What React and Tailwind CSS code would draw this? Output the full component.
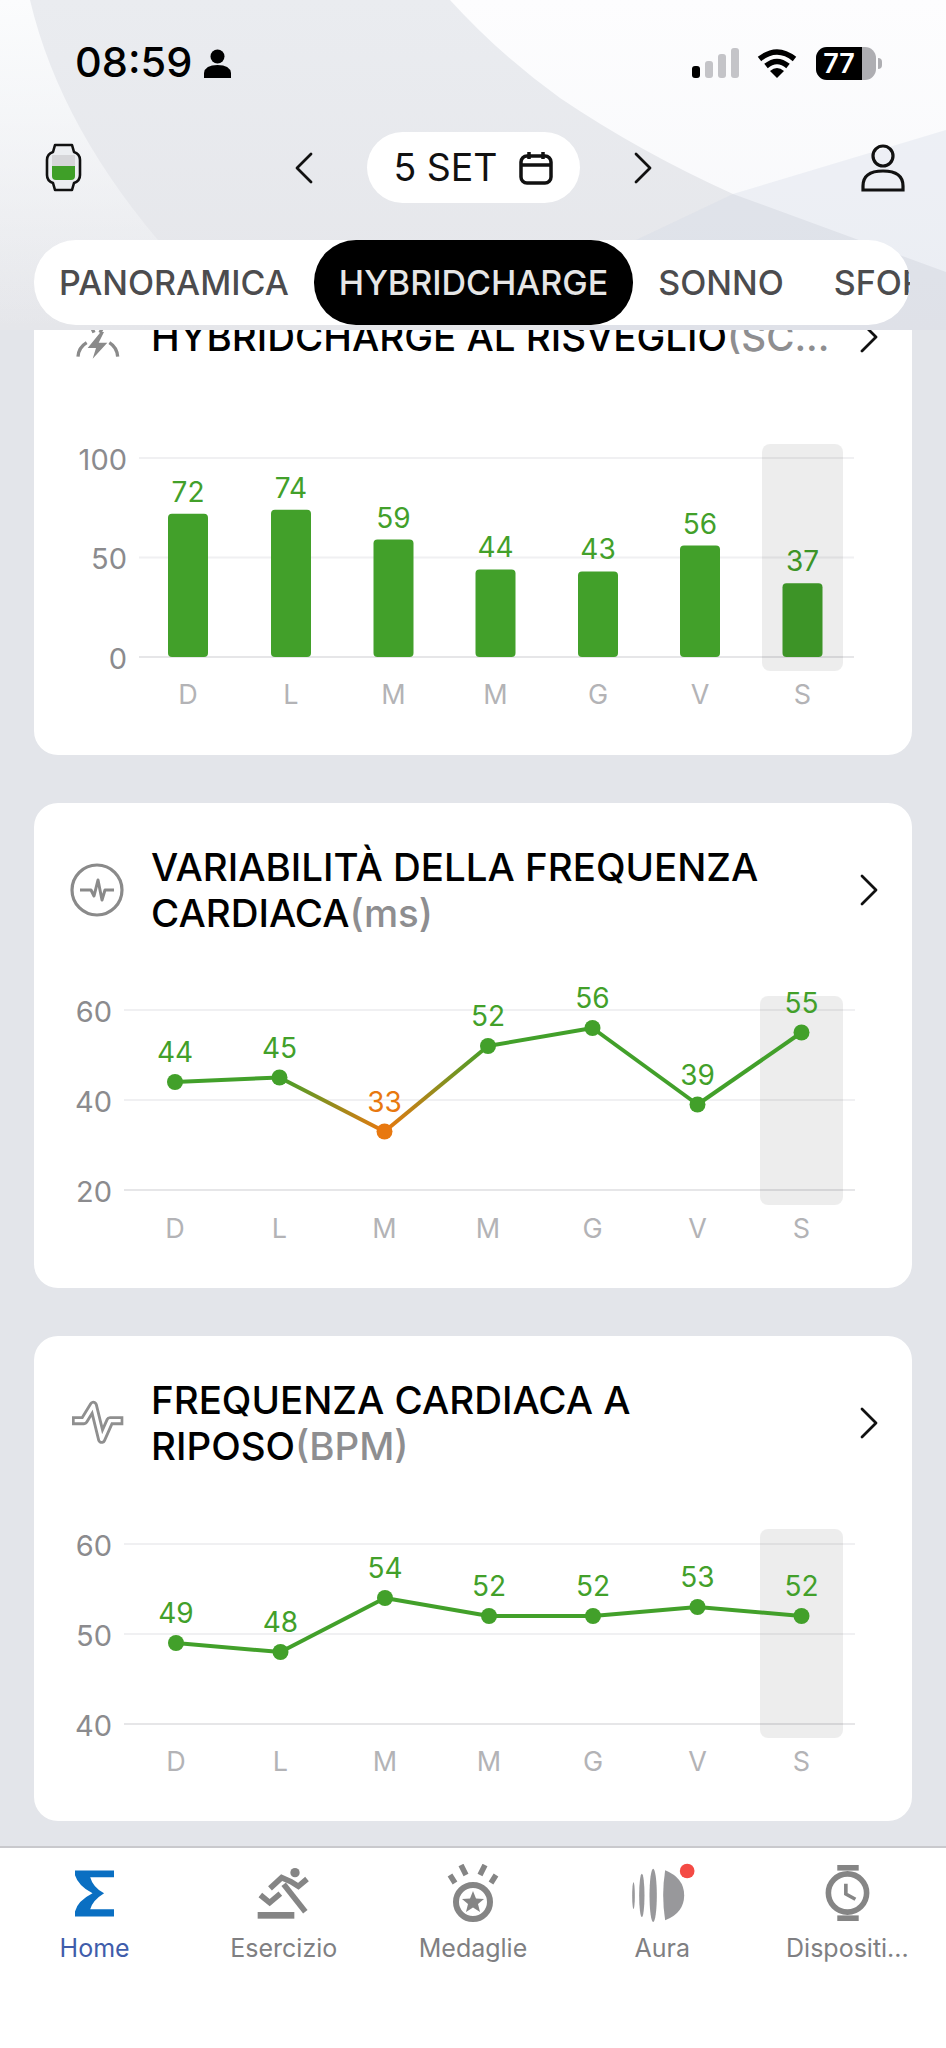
import React from 'react';

const GREEN = '#42a02a';
const ORANGE = '#e8780f';
const DAYS = ['D', 'L', 'M', 'M', 'G', 'V', 'S'];

function Chevron({ dir = 'right', className = '' }) {
  return (
    <svg viewBox="0 0 18 32" className={className} fill="none" stroke="#111" strokeWidth="2.8" strokeLinecap="round" strokeLinejoin="round">
      <path d={dir === 'right' ? 'M2 2 L16 16 L2 30' : 'M16 2 L2 16 L16 30'} />
    </svg>
  );
}

function BarChart({ values }) {
  const xs = [188, 291, 393.5, 495.5, 598, 700, 802.5];
  const zero = 293;
  const unit = 1.99;
  return (
    <svg width="878" height="391" className="block">
      {[100, 50, 0].map((t) => (
        <g key={t}>
          <line x1="105" x2="820" y1={zero - t * unit} y2={zero - t * unit} stroke={t === 0 ? '#e6e6e8' : '#f0f0f2'} strokeWidth="2" />
          <text x="93" y={zero - t * unit + 1} textAnchor="end" dominantBaseline="central" fontSize="29" fill="#8b8b8e">{t}</text>
        </g>
      ))}
      {values.map((v, i) => (
        <g key={i}>
          <path
            d={`M${xs[i] - 54} ${zero - 4} v${-(v * unit) + 8} q0 -4 4 -4 h32 q4 0 4 4 v${v * unit - 8} q0 4 -4 4 h-32 q-4 0 -4 -4 z`}
            fill={GREEN}
          />
          <text x={xs[i] - 34} y={zero - v * unit - 22} textAnchor="middle" dominantBaseline="central" fontSize="28" fill={GREEN}>{v}</text>
          <text x={xs[i] - 34} y="330" textAnchor="middle" dominantBaseline="central" fontSize="27" fill="#b3b3b6">{DAYS[i]}</text>
        </g>
      ))}
      <rect x="728" y="80" width="81" height="227" rx="8" fill="#000" fillOpacity="0.07" />
    </svg>
  );
}

function LineChart({ id, values, ticks, xs, gridY, highlight, dayY, low }) {
  const y = (v) => gridY[2] + ((v - ticks[2]) / (ticks[0] - ticks[2])) * (gridY[0] - gridY[2]);
  const color = (v) => (low && v === low ? ORANGE : GREEN);
  return (
    <svg width="878" height={dayY + 60} className="block">
      <defs>
        {values.slice(1).map((v, i) => (
          <linearGradient key={i} id={`${id}-${i}`} gradientUnits="userSpaceOnUse" x1={xs[i]} x2={xs[i + 1]} y1={y(values[i])} y2={y(v)}>
            <stop offset="0" stopColor={color(values[i])} />
            <stop offset="1" stopColor={color(v)} />
          </linearGradient>
        ))}
      </defs>
      {ticks.map((t, i) => (
        <g key={t}>
          <line x1="90" x2="821" y1={gridY[i]} y2={gridY[i]} stroke={i === 2 ? '#e6e6e8' : '#f0f0f2'} strokeWidth="2" />
          <text x="78" y={gridY[i] + 1} textAnchor="end" dominantBaseline="central" fontSize="29" fill="#8b8b8e">{t}</text>
        </g>
      ))}
      <rect x={highlight[0]} y={highlight[1]} width="83" height={highlight[2]} rx="8" fill="#000" fillOpacity="0.07" />
      {values.slice(1).map((v, i) => (
        <line key={i} x1={xs[i]} x2={xs[i + 1]} y1={y(values[i])} y2={y(v)} stroke={values[i] === v ? GREEN : `url(#${id}-${i})`} strokeWidth="4" />
      ))}
      {values.map((v, i) => (
        <g key={i}>
          <circle cx={xs[i]} cy={y(v)} r="8" fill={color(v)} />
          <text x={xs[i]} y={y(v) - 30} textAnchor="middle" dominantBaseline="central" fontSize="28" fill={color(v)}>{v}</text>
          <text x={xs[i]} y={dayY} textAnchor="middle" dominantBaseline="central" fontSize="27" fill="#b3b3b6">{DAYS[i]}</text>
        </g>
      ))}
    </svg>
  );
}

function Card({ icon, title, unit, children }) {
  return (
    <div className="w-[878px] ml-[34px] rounded-[24px] bg-white overflow-hidden">
      <div className="flex items-center pt-[41px] pl-[36px] pr-[34px]">
        <div className="w-[54px] h-[54px] mr-[27px] shrink-0">{icon}</div>
        <div className="flex-1 text-[38.5px] leading-[46px] font-medium text-black whitespace-pre-line">
          {title}
          <span className="text-[#8e8e90]">{unit}</span>
        </div>
        <Chevron className="w-[18px] h-[32px] shrink-0" />
      </div>
      {children}
    </div>
  );
}

function ChargeIcon() {
  return (
    <svg viewBox="60 6 162 162" className="w-full h-full">
      <path d="M112 30 L132 74 M172 30 L150 74" stroke="#8a8a8a" strokeWidth="10" />
      <path d="M152 72 L113 120 H138 L128 152 L172 104 H146 L162 72 Z" fill="#8a8a8a" />
      <path d="M84 146 Q86 118 110 104 M203 146 Q201 118 178 104" stroke="#8a8a8a" strokeWidth="10" fill="none" />
    </svg>
  );
}

function HrvIcon() {
  return (
    <svg viewBox="0 0 54 54" className="w-full h-full" fill="none" stroke="#8a8a8a">
      <circle cx="27" cy="27" r="25" strokeWidth="3.2" />
      <path d="M10 27 H21 L24 33 L28 17 L32 37 L35 27 H44" strokeWidth="3" strokeLinejoin="round" />
    </svg>
  );
}

function RestIcon() {
  return (
    <svg viewBox="30 18 162 162" className="w-full h-full" fill="none" strokeLinejoin="round">
      <path d="M36 92 H72 L100 46 L125 148 L150 92 H190" stroke="#8f8f8f" strokeWidth="27" />
      <path d="M44 92 H72 L100 46 L125 148 L150 92 H182" stroke="#fff" strokeWidth="10" />
    </svg>
  );
}

function SigmaIcon() {
  return (
    <svg viewBox="42 58 118 139" className="w-[39px] h-[47px]">
      <path d="M42 58 H160 V78 H88 Q96 108 130 127 Q96 148 88 175 H160 V197 H42 V182 Q50 150 95 127 Q52 104 42 72 Z" fill="#0a6fc2" />
    </svg>
  );
}

function RunnerIcon() {
  return (
    <svg viewBox="585 45 165 162" className="w-[55px] h-[54px]" fill="none" stroke="#858585" strokeWidth="17">
      <circle cx="702" cy="65" r="14" fill="#858585" stroke="none" />
      <path d="M627 112 L662 80 L690 92 L712 106 L738 84" />
      <path d="M668 100 L733 182" />
      <path d="M598 132 L626 155 L658 128" />
      <rect x="590" y="183" width="110" height="20" fill="#858585" stroke="none" />
    </svg>
  );
}

function MedalIcon() {
  return (
    <svg viewBox="0 0 56 58" className="w-[56px] h-[58px]" fill="none" stroke="#858585">
      <path d="M5 11 L10 19 M16 1 L21 11 M40 1 L35 11 M51 11 L46 19" strokeWidth="5.5" />
      <circle cx="28" cy="38" r="17" strokeWidth="6" />
      <path d="M28 27 L31 34.5 L39 35 L33 40 L35 48 L28 43.5 L21 48 L23 40 L17 35 L25 34.5 Z" fill="#858585" stroke="none" />
    </svg>
  );
}

function AuraIcon() {
  return (
    <svg viewBox="520 30 200 180" className="w-[67px] h-[60px]">
      <ellipse cx="533" cy="128" rx="4" ry="40" fill="#98989b" />
      <ellipse cx="558" cy="127" rx="8" ry="65" fill="#98989b" />
      <ellipse cx="592" cy="127" rx="11" ry="80" fill="#98989b" />
      <path d="M628 52 Q685 75 685 127 Q685 180 628 202 Q616 127 628 52 Z" fill="#98989b" />
      <circle cx="694" cy="54" r="22" fill="#f44a44" />
    </svg>
  );
}

function DeviceIcon() {
  return (
    <svg viewBox="1100 40 146 176" className="w-[49px] h-[58px]" fill="none" stroke="#858585">
      <rect x="1142" y="43" width="65" height="17" fill="#858585" stroke="none" />
      <rect x="1142" y="196" width="65" height="17" fill="#858585" stroke="none" />
      <circle cx="1173" cy="128" r="58" strokeWidth="17" />
      <path d="M1168 100 V131 L1197 147" strokeWidth="11" />
    </svg>
  );
}

function NavItem({ icon, label, active, className = '' }) {
  return (
    <div className={`flex flex-col items-center ${className}`}>
      <div className="h-[60px] flex items-center justify-center">{icon}</div>
      <div className={`mt-[10px] text-[25px] leading-[30px] whitespace-nowrap ${active ? 'text-[#3f5dab]' : 'text-[#7f7f82]'}`}>{label}</div>
    </div>
  );
}

export default function App() {
  return (
    <div className="relative w-[946px] h-[2048px] overflow-hidden flex flex-col bg-[#e3e5ea] [font-family:Inter,sans-serif]">
      {/* soft shapes behind the header */}
      <svg className="absolute left-0 top-0" width="946" height="330" viewBox="0 0 946 330">
        <defs>
          <linearGradient id="bg-main" x1="0" x2="0" y1="0" y2="1">
            <stop offset="0" stopColor="#eaecf0" />
            <stop offset="1" stopColor="#e5e6ea" />
          </linearGradient>
          <linearGradient id="bg-left" x1="0" x2="0" y1="0" y2="1">
            <stop offset="0" stopColor="#fbfcfd" />
            <stop offset="1" stopColor="#fbfcfd" stopOpacity="0" />
          </linearGradient>
          <linearGradient id="bg-top" x1="0" x2="0" y1="0" y2="1">
            <stop offset="0" stopColor="#fdfdfe" />
            <stop offset="1" stopColor="#f6f7fa" />
          </linearGradient>
        </defs>
        <rect width="946" height="330" fill="url(#bg-top)" />
        <path d="M450 0 Q500 55 560 98 Q640 152 733 194 L946 272 V330 H0 V0 Z" fill="url(#bg-main)" />
        <path d="M0 0 H30 Q70 170 245 330 H0 Z" fill="url(#bg-left)" />
        <path d="M946 130 L733 194 L560 276 V330 H946 Z" fill="#d0d6e4" fillOpacity="0.3" />
      </svg>

      <div className="relative h-[126px] shrink-0 flex items-center justify-between pl-[75px] pr-[64px]">
        <div className="flex items-center gap-[12px]">
          <span className="text-[41.5px] font-medium text-black leading-none">08:59</span>
          <svg viewBox="0 0 27 29" className="w-[27px] h-[29px]">
            <circle cx="13.5" cy="7.5" r="7" fill="#000" />
            <path d="M0 29 V24 Q1 16 13.5 16 Q26 16 27 24 V29 Z" fill="#000" />
          </svg>
        </div>
        <div className="flex items-center">
          <div className="flex items-end gap-[5px] h-[30px]">
            <div className="w-[8px] h-[12px] rounded-[3px] bg-black" />
            <div className="w-[8px] h-[17px] rounded-[3px] bg-[#c4c4c8]" />
            <div className="w-[8px] h-[24px] rounded-[3px] bg-[#c4c4c8]" />
            <div className="w-[8px] h-[30px] rounded-[3px] bg-[#c4c4c8]" />
          </div>
          <svg viewBox="0 0 40 31" className="w-[40px] h-[31px] ml-[18px]" fill="none" stroke="#000" strokeWidth="5.5">
            <path d="M2.5 11 Q20 -3 37.5 11" />
            <path d="M9 18 Q20 9 31 18" />
            <path d="M13 23 L20 30 L27 23 Q20 17 13 23 Z" fill="#000" stroke="none" />
          </svg>
          <div className="ml-[19px] w-[60px] h-[33px] rounded-[11px] overflow-hidden bg-[#aeaeb2] flex">
            <div className="w-[46px] bg-black text-white text-[27px] font-semibold leading-[33px] text-center">77</div>
          </div>
          <div className="ml-[2px] w-[4px] h-[11px] rounded-r-[4px] bg-[#aeaeb2]" />
        </div>
      </div>

      <div className="relative shrink-0 mt-[6px] h-[71px] px-[41px] grid grid-cols-[1fr_auto_1fr] items-center">
        <svg viewBox="0 0 37 49" className="w-[37px] h-[49px] ml-[4px]">
          <path d="M10 2 H27 L29 9 Q35 11 35 17 V32 Q35 38 29 40 L27 47 H10 L8 40 Q2 38 2 32 V17 Q2 11 8 9 Z" fill="#eceef1" stroke="#111" strokeWidth="2.6" strokeLinejoin="round" />
          <path d="M7 12 H30 V23 H7 Z" fill="#d6d6d9" />
          <path d="M7 23 H30 V33 Q30 37 26 37 H11 Q7 37 7 33 Z" fill="#3f9f28" />
        </svg>
        <div className="flex items-center">
          <Chevron dir="left" className="w-[18px] h-[32px]" />
          <div className="mx-[54px] w-[213px] h-[71px] rounded-[36px] bg-white flex items-center justify-center">
            <span className="text-[37.5px] text-[#111] leading-none">5 SET</span>
            <svg viewBox="0 0 34 34" className="w-[34px] h-[34px] ml-[21px]" fill="none" stroke="#111" strokeWidth="3.5">
              <rect x="2" y="5" width="30" height="27" rx="6" />
              <path d="M2 14 H32 M10 1 V8 M24 1 V8" />
            </svg>
          </div>
          <Chevron className="w-[18px] h-[32px]" />
        </div>
        <svg viewBox="0 0 44 48" className="w-[44px] h-[48px] justify-self-end" fill="none" stroke="#111" strokeWidth="3.2">
          <circle cx="22" cy="12" r="10" />
          <path d="M2 46 V42 Q2 27 22 27 Q42 27 42 42 V46 Z" />
        </svg>
      </div>

      <div className="relative shrink-0 mt-[37px] ml-[34px] w-[876px] h-[85px] rounded-[42px] bg-white overflow-hidden flex items-stretch text-[34px] font-medium text-[#4c4c4e] whitespace-nowrap">
        <div className="px-[25px] flex items-center shrink-0">PANORAMICA</div>
        <div className="px-[25px] flex items-center shrink-0 rounded-[42px] bg-black text-[#e6e6e6]">HYBRIDCHARGE</div>
        <div className="px-[25px] flex items-center shrink-0">SONNO</div>
        <div className="px-[25px] flex items-center shrink-0">SFORZO</div>
      </div>

      <div className="relative mt-[5px] flex-1 overflow-hidden">
        <div className="flex flex-col gap-[48px] -mt-[61px]">
          <Card icon={<ChargeIcon />} title="HYBRIDCHARGE AL RISVEGLIO" unit="(SC...">
            <BarChart values={[72, 74, 59, 44, 43, 56, 37]} />
          </Card>
          <Card icon={<HrvIcon />} title={'VARIABILITÀ DELLA FREQUENZA\nCARDIACA'} unit="(ms)">
            <LineChart
              id="hrv"
              values={[44, 45, 33, 52, 56, 39, 55]}
              ticks={[60, 40, 20]}
              xs={[141, 245.5, 350.5, 454, 558.5, 663.5, 767.5]}
              gridY={[74, 164, 254]}
              highlight={[726, 60, 209]}
              dayY={292}
              low={33}
            />
          </Card>
          <Card icon={<RestIcon />} title={'FREQUENZA CARDIACA A\nRIPOSO'} unit="(BPM)">
            <LineChart
              id="rhr"
              values={[49, 48, 54, 52, 52, 53, 52]}
              ticks={[60, 50, 40]}
              xs={[142, 246.5, 351, 455, 559, 663.5, 767.5]}
              gridY={[75, 165, 255]}
              highlight={[726, 60, 209]}
              dayY={292}
            />
          </Card>
        </div>
      </div>

      <div className="relative shrink-0 h-[202px] border-t-2 border-[#c9c9cd] bg-white pt-[15px] grid grid-cols-5 items-start">
        <NavItem icon={<SigmaIcon />} label="Home" active />
        <NavItem icon={<RunnerIcon />} label="Esercizio" />
        <NavItem icon={<MedalIcon />} label="Medaglie" />
        <NavItem icon={<AuraIcon />} label="Aura" />
        <NavItem icon={<DeviceIcon />} label="Dispositi..." className="pr-[8px]" />
      </div>
    </div>
  );
}
